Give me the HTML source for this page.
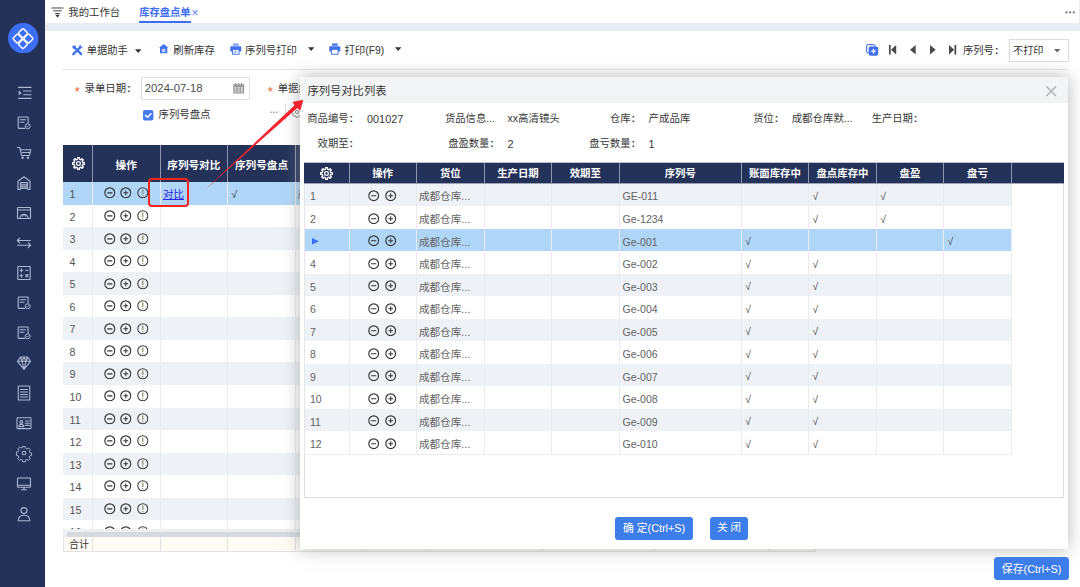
<!DOCTYPE html><html lang="zh-CN"><head><meta charset="utf-8"><title>库存盘点单</title><style>
*{box-sizing:border-box;margin:0;padding:0}
html,body{width:1080px;height:587px;overflow:hidden;background:#fff}
body{position:relative;font-family:"Liberation Sans","Noto Sans CJK SC",sans-serif;font-size:10.4px;color:#333;-webkit-font-smoothing:antialiased}
.abs{position:absolute}
.t{position:absolute;white-space:nowrap;line-height:14px;height:14px}
.sidebar{position:absolute;left:0;top:0;width:45px;height:587px;background:#24325a}
.sb{position:absolute;left:13.5px;width:20px;height:20px;overflow:visible}
.band{position:absolute;left:45px;top:23px;width:1035px;height:8px;background:#e7ecf5}
.hline{position:absolute;left:62px;top:69px;width:1006px;height:1px;background:#e6e6e6}
.mt{position:absolute;left:63px;top:145px;width:754px}
.mhead{position:absolute;left:0;top:0;height:36.7px;width:754px;background:#24325a}
.mh{position:absolute;top:0;height:36.7px;line-height:40.6px;color:#fff;font-weight:bold;font-size:10.6px;text-align:center;border-right:1px solid #8f97ae}
.mrow{position:absolute;left:0;height:23.6px;width:754px}
.mc{position:absolute;top:0;height:100%;border-right:1px solid #eaebee;line-height:22.6px;padding-top:1px;color:#555;font-size:10.6px;padding-left:6.6px;white-space:nowrap;overflow:hidden}
.dlg{position:absolute;left:300px;top:77px;width:768px;height:472px;border-left:1px solid #fff;background:#fff;box-shadow:0 0 16px rgba(140,140,140,.62)}
.dtitle{position:absolute;left:0;top:0;width:100%;height:25.6px;background:#f3f4f6}
.dh{position:absolute;top:0;height:20.6px;line-height:21.6px;color:#fff;font-weight:bold;font-size:10.4px;text-align:center;border-right:1px solid #8f97ae}
.drow{position:absolute;left:0;height:23px;width:708px}
.dc{position:absolute;top:0;height:100%;border-right:1px solid #eaebee;line-height:23.4px;padding-top:1.8px;color:#626262;font-size:10.5px;padding-left:3px;white-space:nowrap;overflow:hidden}
.lab{position:absolute;white-space:nowrap;line-height:14px;height:14px;text-align:right;color:#383838;font-size:10.3px}
.val{position:absolute;white-space:nowrap;line-height:14px;height:14px;color:#383838;font-size:10.45px}
.val.n{font-size:10.9px}
.btn{position:absolute;background:#3c7de9;color:#fff;border-radius:3px;text-align:center;white-space:nowrap}
.ico{position:absolute;overflow:visible}
.cl{display:inline-block;width:5.5px;text-align:center;font-weight:bold}
</style></head><body>

<svg width="0" height="0" style="position:absolute">
<defs>
<symbol id="cm" viewBox="0 0 12 12"><circle cx="6" cy="6" r="5.15" fill="none" stroke="#333" stroke-width="1.2"/><line x1="3.3" y1="6" x2="8.7" y2="6" stroke="#333" stroke-width="1.2"/></symbol>
<symbol id="cp" viewBox="0 0 12 12"><circle cx="6" cy="6" r="5.15" fill="none" stroke="#333" stroke-width="1.2"/><line x1="3.5" y1="6" x2="8.5" y2="6" stroke="#333" stroke-width="1.1"/><line x1="6" y1="3.5" x2="6" y2="8.5" stroke="#333" stroke-width="1.1"/></symbol>
<symbol id="ce" viewBox="0 0 12 12"><circle cx="6" cy="6" r="5.2" fill="none" stroke="#3a3a3a" stroke-width="1.1"/><line x1="6" y1="2.7" x2="6" y2="7.3" stroke="#7d7d55" stroke-width="1.1"/><circle cx="6" cy="9" r="0.7" fill="#7d7d55"/></symbol>
<symbol id="gear" viewBox="0 0 24 24"><path fill="none" stroke="#fff" stroke-width="2.5" stroke-linejoin="round" d="M10.11 4.12L10.41 1.22L13.59 1.22L13.89 4.12L16.23 5.09L18.5 3.25L20.75 5.5L18.91 7.77L19.88 10.11L22.78 10.41L22.78 13.59L19.88 13.89L18.91 16.23L20.75 18.5L18.5 20.75L16.23 18.91L13.89 19.88L13.59 22.78L10.41 22.78L10.11 19.88L7.77 18.91L5.5 20.75L3.25 18.5L5.09 16.23L4.12 13.89L1.22 13.59L1.22 10.41L4.12 10.11L5.09 7.77L3.25 5.5L5.5 3.25L7.77 5.09z"/><circle cx="12" cy="12" r="3.5" fill="none" stroke="#fff" stroke-width="2.3"/></symbol>
<symbol id="doc" viewBox="0 0 20 20"><path fill="none" stroke="#aeb7d3" stroke-width="1.1" stroke-linecap="round" d="M10.6 15.4H5a.8.8 0 0 1-.8-.8V4.8A.8.8 0 0 1 5 4h8.3a.8.8 0 0 1 .8.8V10M6.2 6.8h5.4M6.2 9.3h3.8"/><circle cx="13.7" cy="13.3" r="2.5" fill="none" stroke="#aeb7d3" stroke-width="1"/><path d="M12.6 13.3l.8.8 1.4-1.5" fill="none" stroke="#aeb7d3" stroke-width=".9"/></symbol>
</defs>
</svg>

<div class="sidebar">
<svg class="abs" style="left:8.35px;top:22.7px" width="30.4" height="30.4" viewBox="0 0 30.4 30.4"><circle cx="15.2" cy="15.2" r="15.2" fill="#3d6ef6"/><g fill="none" stroke="#fff" stroke-width="1.45" transform="translate(15 15.6) rotate(45)"><rect x="-7.3" y="-7.3" width="6.9" height="6.9" rx="1.2"/><rect x=".4" y="-7.3" width="6.9" height="6.9" rx="1.2"/><rect x="-7.3" y=".4" width="6.9" height="6.9" rx="1.2"/><rect x=".4" y=".4" width="6.9" height="6.9" rx="1.2"/></g></svg>
<svg class="sb" style="top:83.2px" viewBox="0 0 20 20"><g fill="none" stroke="#aeb7d3" stroke-width="1.1" stroke-linecap="round" stroke-linejoin="round"><path d="M4.7 4.4h12.4M9.5 8h7.6M9.5 11.7h7.6M4.7 15.4h12.4"/></g><path d="M4.7 7.6l3 2.3-3 2.3z" fill="#aeb7d3"/></svg>
<svg class="sb" style="top:113.2px" viewBox="0 0 20 20"><use href="#doc"/></svg>
<svg class="sb" style="top:143.2px" viewBox="0 0 20 20"><g fill="none" stroke="#aeb7d3" stroke-width="1.1" stroke-linecap="round" stroke-linejoin="round"><path d="M3.5 4.5h2.2l2 8h7.6l1.5-5.8H6.5"/><circle cx="8.6" cy="14.8" r=".7"/><circle cx="14" cy="14.8" r=".7"/><path d="M8.4 9.5h7.5"/></g></svg>
<svg class="sb" style="top:173.3px" viewBox="0 0 20 20"><g fill="none" stroke="#aeb7d3" stroke-width="1.1" stroke-linecap="round" stroke-linejoin="round"><path d="M4 16.5V8.2L10 3.8l6 4.4v8.3h-2.2v-1.2H6.2v1.2z"/><path d="M6.5 9.5h7v5.5h-7zM6.5 11.3h7M6.5 13.1h7"/></g></svg>
<svg class="sb" style="top:203.3px" viewBox="0 0 20 20"><g fill="none" stroke="#aeb7d3" stroke-width="1.1" stroke-linecap="round" stroke-linejoin="round"><rect x="3.5" y="4.5" width="13" height="11" rx=".6"/><path d="M3.5 7h13M6 15.3a4 4 0 0 1 8 0M10 11.3v1.2M7.8 12.3l.7.8M12.2 12.3l-.7.8"/></g></svg>
<svg class="sb" style="top:233.3px" viewBox="0 0 20 20"><g fill="none" stroke="#aeb7d3" stroke-width="1.1" stroke-linecap="round" stroke-linejoin="round"><path d="M16.4 7.5H3.3M5.7 5.1L3.3 7.5l2.4 2.4M3.6 12.3h13.1M14.3 9.9l2.4 2.4-2.4 2.4"/></g></svg>
<svg class="sb" style="top:263.3px" viewBox="0 0 20 20"><g fill="none" stroke="#aeb7d3" stroke-width="1.1" stroke-linecap="round" stroke-linejoin="round"><rect x="3.8" y="3.5" width="12.4" height="13" rx=".6"/><path d="M6 7.3h2.8M7.4 5.9v2.8M11.5 7.3h2.6M6 12.7h2.8M7.4 11.3v2.8M11.7 11.5l2.3 2.4M14 11.5l-2.3 2.4"/></g></svg>
<svg class="sb" style="top:293.3px" viewBox="0 0 20 20"><use href="#doc"/></svg>
<svg class="sb" style="top:323.4px" viewBox="0 0 20 20"><use href="#doc"/></svg>
<svg class="sb" style="top:353.4px" viewBox="0 0 20 20"><g fill="none" stroke="#aeb7d3" stroke-width="1.1" stroke-linecap="round" stroke-linejoin="round"><path d="M3.5 8.3L6.5 4h7l3 4.3L10 16.5zM3.5 8.3h13M6.5 4l1.5 4.3 2 8.2M13.5 4L12 8.3l-2 8.2M10 4L8 8.3M10 4l2 4.3"/></g></svg>
<svg class="sb" style="top:383.4px" viewBox="0 0 20 20"><g fill="none" stroke="#aeb7d3" stroke-width="1.1" stroke-linecap="round" stroke-linejoin="round"><rect x="4.3" y="3" width="11.4" height="14" rx=".6"/><path d="M6.5 6.5h7M6.5 9h7M6.5 11.5h7M6.5 14h7"/></g></svg>
<svg class="sb" style="top:413.4px" viewBox="0 0 20 20"><g fill="none" stroke="#aeb7d3" stroke-width="1.1" stroke-linecap="round" stroke-linejoin="round"><rect x="3" y="4.8" width="14" height="10.8" rx=".6"/><circle cx="7.3" cy="9" r="1.4"/><path d="M4.8 13.7c.3-1.7 1.3-2.3 2.5-2.3s2.2.6 2.5 2.3zM11.3 8h4M11.3 10.2h4M11.3 12.4h4"/></g></svg>
<svg class="sb" style="top:443.4px" viewBox="0 0 20 20"><g fill="none" stroke="#aeb7d3" stroke-width="1.1" stroke-linecap="round" stroke-linejoin="round"><path d="M8.6 2.8h2.8l.5 2 1.5.7 1.8-1.1 2 2-1.1 1.8.7 1.5 2 .5v2.8l-2 .5-.7 1.5 1.1 1.8-2 2-1.8-1.1-1.5.7-.5 2H8.6l-.5-2-1.5-.7-1.8 1.1-2-2 1.1-1.8-.7-1.5-2-.5V9.2l2-.5.7-1.5-1.1-1.8 2-2 1.8 1.1 1.5-.7z" transform="translate(1.4 1.2) scale(.86)"/><circle cx="10" cy="10" r="1.8"/></g></svg>
<svg class="sb" style="top:473.5px" viewBox="0 0 20 20"><g fill="none" stroke="#aeb7d3" stroke-width="1.1" stroke-linecap="round" stroke-linejoin="round"><rect x="3.5" y="4" width="13" height="9.2" rx=".5"/><path d="M3.5 11.3h13M7.5 15.8h5M10 13.2v2.6"/></g></svg>
<svg class="sb" style="top:503.5px" viewBox="0 0 20 20"><g fill="none" stroke="#aeb7d3" stroke-width="1.1" stroke-linecap="round" stroke-linejoin="round"><circle cx="10" cy="6.6" r="3"/><path d="M4.3 16.8c0-4 2.5-5.6 5.7-5.6s5.7 1.6 5.7 5.6z"/></g></svg>
</div>
<svg class="ico" style="left:50.5px;top:6.5px" width="13" height="11" viewBox="0 0 13 11"><path d="M.5 1h12M2.3 3.8h8.4M4.3 6.5h4.4" stroke="#444" stroke-width="1" fill="none"/><path d="M4.2 7.8h4.6L6.5 10.5z" fill="#333"/></svg>
<div class="t" style="left:68.3px;top:5.8px;font-size:10.4px;color:#333">我的工作台</div>
<div class="t" style="left:139.2px;top:5.8px;font-size:10.3px;color:#3d6df5;font-weight:bold">库存盘点单</div>
<div class="t" style="left:191.6px;top:5.8px;font-size:12px;color:#5f86f0">×</div>
<div class="abs" style="left:139.2px;top:20.5px;width:51.6px;height:2.5px;background:#3d6df5"></div>
<svg class="ico" style="left:1065px;top:10.5px" width="10" height="3" viewBox="0 0 10 3"><circle cx="1.4" cy="1.4" r="1.15" fill="#7d7d7d"/><circle cx="5.1" cy="1.4" r="1.15" fill="#7d7d7d"/><circle cx="8.8" cy="1.4" r="1.15" fill="#7d7d7d"/></svg>
<div class="band"></div>
<div class="abs" style="left:1079px;top:0;width:1px;height:24px;background:#e7ecf5"></div>
<svg class="ico" style="left:71.5px;top:44.8px" width="10.5" height="10.5" viewBox="0 0 12 12"><path d="M2 2l8.5 8.5M10 2L1.5 10.5" stroke="#4271ec" stroke-width="2.7" stroke-linecap="round"/><path d="M.3 2.3L2.3.3 4.5 1.5 3.8 3.8 1.5 4.5z" fill="#4271ec"/><circle cx="10" cy="2" r="2" fill="#4271ec"/><circle cx="11" cy="1" r="1.1" fill="#fff"/></svg>
<div class="t" style="left:86.7px;top:44.3px;font-size:10.3px">单据助手</div>
<svg class="ico" style="left:134.8px;top:48.8px" width="6.4" height="4" viewBox="0 0 6.4 4"><path d="M0 .3h6.4L3.2 4z" fill="#333"/></svg>
<svg class="ico" style="left:159.3px;top:44.2px" width="9.3" height="9.3" viewBox="0 0 9 9"><path d="M4.5 0L9 3.6H8V9H1V3.6H0z" fill="#4271ec"/><path d="M3.2 7.4V5.2h2.6v2.2zM4.5 5.2v2.2" stroke="#fff" stroke-width=".7" fill="none"/></svg>
<div class="t" style="left:173.3px;top:44.3px;font-size:10.4px">刷新库存</div>
<svg class="ico" style="left:229.8px;top:43.3px" width="11.6" height="11.6" viewBox="0 0 12 12"><path d="M3 0.5h6v2.3H3z" fill="#7f9df5"/><rect x="0.3" y="3.3" width="11.4" height="5.6" rx="1" fill="#4271ec"/><rect x="2.6" y="6.6" width="6.8" height="5" fill="#fff" stroke="#4271ec" stroke-width="1"/><path d="M4.2 8.5h3.6M4.2 10h2" stroke="#4271ec" stroke-width=".7"/></svg>
<div class="t" style="left:245px;top:44.3px;font-size:10.4px">序列号打印</div>
<svg class="ico" style="left:308.3px;top:47.4px" width="6.4" height="4" viewBox="0 0 6.4 4"><path d="M0 .3h6.4L3.2 4z" fill="#333"/></svg>
<svg class="ico" style="left:329px;top:43.3px" width="11.6" height="11.6" viewBox="0 0 12 12"><path d="M3 0.5h6v2.3H3z" fill="#4271ec"/><rect x="0.3" y="3.3" width="11.4" height="5.6" rx="1" fill="#4271ec"/><rect x="2.6" y="6.6" width="6.8" height="5" fill="#fff" stroke="#4271ec" stroke-width="1"/></svg>
<div class="t" style="left:344.4px;top:44.3px;font-size:10.4px">打印(F9)</div>
<svg class="ico" style="left:394.8px;top:47.4px" width="6.4" height="4" viewBox="0 0 6.4 4"><path d="M0 .3h6.4L3.2 4z" fill="#333"/></svg>
<svg class="ico" style="left:865.6px;top:43.8px" width="12.2" height="11.8" viewBox="0 0 12.2 11.8"><rect x=".5" y=".5" width="8.6" height="8.4" rx="1.6" fill="#dfe7fd" stroke="#4271ec" stroke-width="1"/><rect x="2.8" y="2.6" width="9.4" height="9.2" rx="1.8" fill="#4271ec"/><path d="M7.5 5v4.4M5.3 7.2h4.4" stroke="#fff" stroke-width="1.3"/></svg>
<svg class="ico" style="left:888.6px;top:45.2px" width="7.2" height="9.6" viewBox="0 0 7.2 8.6" preserveAspectRatio="none"><rect x="0" y="0" width="1.7" height="8.6" fill="#4a4a4a"/><path d="M7.2 0v8.6L2 4.3z" fill="#4a4a4a"/></svg>
<svg class="ico" style="left:910px;top:45.2px" width="5.7" height="9.6" viewBox="0 0 5.7 8.6" preserveAspectRatio="none"><path d="M5.7 0v8.6L0 4.3z" fill="#4a4a4a"/></svg>
<svg class="ico" style="left:929.8px;top:45.2px" width="5.7" height="9.6" viewBox="0 0 5.7 8.6" preserveAspectRatio="none"><path d="M0 0v8.6L5.7 4.3z" fill="#4a4a4a"/></svg>
<svg class="ico" style="left:949px;top:45.2px" width="7.2" height="9.6" viewBox="0 0 7.2 8.6" preserveAspectRatio="none"><rect x="5.5" y="0" width="1.7" height="8.6" fill="#4a4a4a"/><path d="M0 0v8.6L5.2 4.3z" fill="#4a4a4a"/></svg>
<div class="t" style="left:963px;top:44.3px;font-size:10.3px">序列号<span class="cl">:</span></div>
<div class="abs" style="left:1009px;top:39px;width:59.5px;height:22.5px;border:1px solid #dcdcdc;background:#fff"></div>
<div class="t" style="left:1013px;top:44.3px;font-size:10.2px">不打印</div>
<svg class="ico" style="left:1053.6px;top:48.8px" width="6.4" height="3.6" viewBox="0 0 6.4 3.6"><path d="M0 0h6.4L3.2 3.6z" fill="#666"/></svg>
<div class="hline"></div>
<div class="t" style="left:74.7px;top:84.5px;font-size:13px;color:#f25a2a">*</div>
<div class="t" style="left:84.6px;top:81.5px;font-size:10.4px">录单日期<span class="cl">:</span></div>
<div class="abs" style="left:141px;top:77.2px;width:108.5px;height:23px;border:1px solid #e0e0e0;background:#fff"></div>
<div class="t" style="left:144.8px;top:81px;font-size:11.3px;color:#4c4c4c">2024-07-18</div>
<svg class="ico" style="left:233px;top:83.2px" width="11.4" height="10.8" viewBox="0 0 11.4 10.8"><rect x=".3" y="1.3" width="10.8" height="9.2" fill="#8c8c8c"/><g fill="#fff" opacity=".72"><rect x="1.3" y="4" width="2.3" height="1.7"/><rect x="4.5" y="4" width="2.3" height="1.7"/><rect x="7.7" y="4" width="2.4" height="1.7"/><rect x="1.3" y="6.2" width="2.3" height="1.5"/><rect x="4.5" y="6.2" width="2.3" height="1.5"/><rect x="7.7" y="6.2" width="2.4" height="1.5"/><rect x="1.3" y="8.2" width="2.3" height="1.4"/><rect x="4.5" y="8.2" width="2.3" height="1.4"/><rect x="7.7" y="8.2" width="2.4" height="1.4"/></g><path d="M2.8 0v2.6M5.7 0v2.6M8.6 0v2.6" stroke="#8c8c8c" stroke-width="1.1"/><path d="M1.3 2.7h1M3.4 2.7h1.6M6.4 2.7h1.6M9.2 2.7h1" stroke="#fff" stroke-width=".6"/></svg>
<div class="t" style="left:267.7px;top:84.5px;font-size:13px;color:#f25a2a">*</div>
<div class="t" style="left:277.7px;top:81.5px;font-size:10.4px">单据编号<span class="cl">:</span></div>
<svg class="ico" style="left:143px;top:109.9px" width="10.4" height="10.4" viewBox="0 0 10.4 10.4"><rect width="10.4" height="10.4" rx="2" fill="#4679ee"/><path d="M2.5 5.4l2 1.9 3.5-3.6" fill="none" stroke="#fff" stroke-width="1.5" stroke-linecap="round" stroke-linejoin="round"/></svg>
<div class="t" style="left:158.5px;top:108.1px;font-size:10.4px">序列号盘点</div>
<svg class="ico" style="left:270px;top:111.3px" width="7.5" height="2.4" viewBox="0 0 7.5 2.4"><circle cx="1" cy="1.2" r=".8" fill="#8a8a8a"/><circle cx="3.75" cy="1.2" r=".8" fill="#8a8a8a"/><circle cx="6.5" cy="1.2" r=".8" fill="#8a8a8a"/></svg>
<div class="abs" style="left:285px;top:103.5px;width:1px;height:17px;background:#ddd"></div>
<svg class="ico" style="left:290.5px;top:106px" width="12" height="12" viewBox="0 0 24 24"><g style="--c:#888"><path fill="none" stroke="#888" stroke-width="2" d="M10.3 2.5h3.4l.6 2.7 1.9.8 2.4-1.5 2.4 2.4-1.5 2.4.8 1.9 2.7.6v3.4l-2.7.6-.8 1.9 1.5 2.4-2.4 2.4-2.4-1.5-1.9.8-.6 2.7h-3.4l-.6-2.7-1.9-.8-2.4 1.5-2.4-2.4 1.5-2.4-.8-1.9-2.7-.6v-3.4l2.7-.6.8-1.9-1.5-2.4 2.4-2.4 2.4 1.5 1.9-.8z" transform="translate(0 -1.7)"/><circle cx="12" cy="12" r="3.2" fill="none" stroke="#888" stroke-width="2"/></g></svg>
<div class="mt">
<div class="mhead">
<div class="mh" style="left:0px;width:29.8px"><svg style="position:absolute;left:8.9px;top:12px" width="13" height="13" viewBox="0 0 24 24"><use href="#gear"/></svg></div>
<div class="mh" style="left:29.8px;width:67.8px">操作</div>
<div class="mh" style="left:97.6px;width:67.4px">序列号对比</div>
<div class="mh" style="left:165px;width:68px">序列号盘点</div>
<div class="mh" style="left:233px;width:66.5px">仓库</div>
<div class="mh" style="left:299.5px;width:67.5px">货位</div>
<div class="mh" style="left:367px;width:113.3px">货品信息</div>
<div class="mh" style="left:480.3px;width:111.7px">序列号</div>
<div class="mh" style="left:592px;width:113.5px">账面数量</div>
<div class="mh" style="left:705.5px;width:47.5px">盘点数量</div>
</div>
<div class="mrow" style="top:36.7px;background:#b0d6f7">
<div class="mc" style="left:0px;width:29.8px;">1</div>
<div class="mc" style="left:29.8px;width:67.8px;"><svg class="ico" style="left:11.2px;top:5.4px" width="11.6" height="11.6"><use href="#cm"/></svg><svg class="ico" style="left:27.6px;top:5.4px" width="11.6" height="11.6"><use href="#cp"/></svg><svg class="ico" style="left:43.8px;top:5.4px" width="11.6" height="11.6"><use href="#ce"/></svg></div>
<div class="mc" style="left:97.6px;width:67.4px;"><span style="color:#2525ee;text-decoration:underline;font-size:10.5px;margin-left:-4.2px">对比</span></div>
<div class="mc" style="left:165px;width:68px;"><span style="margin-left:-3.3px;font-size:10.6px;color:#333;position:relative;top:.2px">√</span></div>
<div class="mc" style="left:233px;width:66.5px;"><span style="margin-left:-5px">产成品库</span></div>
<div class="mc" style="left:299.5px;width:67.5px;"></div>
<div class="mc" style="left:367px;width:113.3px;"></div>
<div class="mc" style="left:480.3px;width:111.7px;"></div>
<div class="mc" style="left:592px;width:113.5px;"></div>
<div class="mc" style="left:705.5px;width:47.5px;"></div>
</div>
<div class="mrow" style="top:59.73px;background:#fff">
<div class="mc" style="left:0px;width:29.8px;">2</div>
<div class="mc" style="left:29.8px;width:67.8px;"><svg class="ico" style="left:11.2px;top:5.4px" width="11.6" height="11.6"><use href="#cm"/></svg><svg class="ico" style="left:27.6px;top:5.4px" width="11.6" height="11.6"><use href="#cp"/></svg><svg class="ico" style="left:43.8px;top:5.4px" width="11.6" height="11.6"><use href="#ce"/></svg></div>
<div class="mc" style="left:97.6px;width:67.4px;"></div>
<div class="mc" style="left:165px;width:68px;"></div>
<div class="mc" style="left:233px;width:66.5px;"></div>
<div class="mc" style="left:299.5px;width:67.5px;"></div>
<div class="mc" style="left:367px;width:113.3px;"></div>
<div class="mc" style="left:480.3px;width:111.7px;"></div>
<div class="mc" style="left:592px;width:113.5px;"></div>
<div class="mc" style="left:705.5px;width:47.5px;"></div>
</div>
<div class="mrow" style="top:82.26px;background:#eef1f6">
<div class="mc" style="left:0px;width:29.8px;">3</div>
<div class="mc" style="left:29.8px;width:67.8px;"><svg class="ico" style="left:11.2px;top:5.4px" width="11.6" height="11.6"><use href="#cm"/></svg><svg class="ico" style="left:27.6px;top:5.4px" width="11.6" height="11.6"><use href="#cp"/></svg><svg class="ico" style="left:43.8px;top:5.4px" width="11.6" height="11.6"><use href="#ce"/></svg></div>
<div class="mc" style="left:97.6px;width:67.4px;"></div>
<div class="mc" style="left:165px;width:68px;"></div>
<div class="mc" style="left:233px;width:66.5px;"></div>
<div class="mc" style="left:299.5px;width:67.5px;"></div>
<div class="mc" style="left:367px;width:113.3px;"></div>
<div class="mc" style="left:480.3px;width:111.7px;"></div>
<div class="mc" style="left:592px;width:113.5px;"></div>
<div class="mc" style="left:705.5px;width:47.5px;"></div>
</div>
<div class="mrow" style="top:104.79px;background:#fff">
<div class="mc" style="left:0px;width:29.8px;">4</div>
<div class="mc" style="left:29.8px;width:67.8px;"><svg class="ico" style="left:11.2px;top:5.4px" width="11.6" height="11.6"><use href="#cm"/></svg><svg class="ico" style="left:27.6px;top:5.4px" width="11.6" height="11.6"><use href="#cp"/></svg><svg class="ico" style="left:43.8px;top:5.4px" width="11.6" height="11.6"><use href="#ce"/></svg></div>
<div class="mc" style="left:97.6px;width:67.4px;"></div>
<div class="mc" style="left:165px;width:68px;"></div>
<div class="mc" style="left:233px;width:66.5px;"></div>
<div class="mc" style="left:299.5px;width:67.5px;"></div>
<div class="mc" style="left:367px;width:113.3px;"></div>
<div class="mc" style="left:480.3px;width:111.7px;"></div>
<div class="mc" style="left:592px;width:113.5px;"></div>
<div class="mc" style="left:705.5px;width:47.5px;"></div>
</div>
<div class="mrow" style="top:127.32px;background:#eef1f6">
<div class="mc" style="left:0px;width:29.8px;">5</div>
<div class="mc" style="left:29.8px;width:67.8px;"><svg class="ico" style="left:11.2px;top:5.4px" width="11.6" height="11.6"><use href="#cm"/></svg><svg class="ico" style="left:27.6px;top:5.4px" width="11.6" height="11.6"><use href="#cp"/></svg><svg class="ico" style="left:43.8px;top:5.4px" width="11.6" height="11.6"><use href="#ce"/></svg></div>
<div class="mc" style="left:97.6px;width:67.4px;"></div>
<div class="mc" style="left:165px;width:68px;"></div>
<div class="mc" style="left:233px;width:66.5px;"></div>
<div class="mc" style="left:299.5px;width:67.5px;"></div>
<div class="mc" style="left:367px;width:113.3px;"></div>
<div class="mc" style="left:480.3px;width:111.7px;"></div>
<div class="mc" style="left:592px;width:113.5px;"></div>
<div class="mc" style="left:705.5px;width:47.5px;"></div>
</div>
<div class="mrow" style="top:149.85px;background:#fff">
<div class="mc" style="left:0px;width:29.8px;">6</div>
<div class="mc" style="left:29.8px;width:67.8px;"><svg class="ico" style="left:11.2px;top:5.4px" width="11.6" height="11.6"><use href="#cm"/></svg><svg class="ico" style="left:27.6px;top:5.4px" width="11.6" height="11.6"><use href="#cp"/></svg><svg class="ico" style="left:43.8px;top:5.4px" width="11.6" height="11.6"><use href="#ce"/></svg></div>
<div class="mc" style="left:97.6px;width:67.4px;"></div>
<div class="mc" style="left:165px;width:68px;"></div>
<div class="mc" style="left:233px;width:66.5px;"></div>
<div class="mc" style="left:299.5px;width:67.5px;"></div>
<div class="mc" style="left:367px;width:113.3px;"></div>
<div class="mc" style="left:480.3px;width:111.7px;"></div>
<div class="mc" style="left:592px;width:113.5px;"></div>
<div class="mc" style="left:705.5px;width:47.5px;"></div>
</div>
<div class="mrow" style="top:172.38px;background:#eef1f6">
<div class="mc" style="left:0px;width:29.8px;">7</div>
<div class="mc" style="left:29.8px;width:67.8px;"><svg class="ico" style="left:11.2px;top:5.4px" width="11.6" height="11.6"><use href="#cm"/></svg><svg class="ico" style="left:27.6px;top:5.4px" width="11.6" height="11.6"><use href="#cp"/></svg><svg class="ico" style="left:43.8px;top:5.4px" width="11.6" height="11.6"><use href="#ce"/></svg></div>
<div class="mc" style="left:97.6px;width:67.4px;"></div>
<div class="mc" style="left:165px;width:68px;"></div>
<div class="mc" style="left:233px;width:66.5px;"></div>
<div class="mc" style="left:299.5px;width:67.5px;"></div>
<div class="mc" style="left:367px;width:113.3px;"></div>
<div class="mc" style="left:480.3px;width:111.7px;"></div>
<div class="mc" style="left:592px;width:113.5px;"></div>
<div class="mc" style="left:705.5px;width:47.5px;"></div>
</div>
<div class="mrow" style="top:194.91px;background:#fff">
<div class="mc" style="left:0px;width:29.8px;">8</div>
<div class="mc" style="left:29.8px;width:67.8px;"><svg class="ico" style="left:11.2px;top:5.4px" width="11.6" height="11.6"><use href="#cm"/></svg><svg class="ico" style="left:27.6px;top:5.4px" width="11.6" height="11.6"><use href="#cp"/></svg><svg class="ico" style="left:43.8px;top:5.4px" width="11.6" height="11.6"><use href="#ce"/></svg></div>
<div class="mc" style="left:97.6px;width:67.4px;"></div>
<div class="mc" style="left:165px;width:68px;"></div>
<div class="mc" style="left:233px;width:66.5px;"></div>
<div class="mc" style="left:299.5px;width:67.5px;"></div>
<div class="mc" style="left:367px;width:113.3px;"></div>
<div class="mc" style="left:480.3px;width:111.7px;"></div>
<div class="mc" style="left:592px;width:113.5px;"></div>
<div class="mc" style="left:705.5px;width:47.5px;"></div>
</div>
<div class="mrow" style="top:217.44px;background:#eef1f6">
<div class="mc" style="left:0px;width:29.8px;">9</div>
<div class="mc" style="left:29.8px;width:67.8px;"><svg class="ico" style="left:11.2px;top:5.4px" width="11.6" height="11.6"><use href="#cm"/></svg><svg class="ico" style="left:27.6px;top:5.4px" width="11.6" height="11.6"><use href="#cp"/></svg><svg class="ico" style="left:43.8px;top:5.4px" width="11.6" height="11.6"><use href="#ce"/></svg></div>
<div class="mc" style="left:97.6px;width:67.4px;"></div>
<div class="mc" style="left:165px;width:68px;"></div>
<div class="mc" style="left:233px;width:66.5px;"></div>
<div class="mc" style="left:299.5px;width:67.5px;"></div>
<div class="mc" style="left:367px;width:113.3px;"></div>
<div class="mc" style="left:480.3px;width:111.7px;"></div>
<div class="mc" style="left:592px;width:113.5px;"></div>
<div class="mc" style="left:705.5px;width:47.5px;"></div>
</div>
<div class="mrow" style="top:239.97px;background:#fff">
<div class="mc" style="left:0px;width:29.8px;">10</div>
<div class="mc" style="left:29.8px;width:67.8px;"><svg class="ico" style="left:11.2px;top:5.4px" width="11.6" height="11.6"><use href="#cm"/></svg><svg class="ico" style="left:27.6px;top:5.4px" width="11.6" height="11.6"><use href="#cp"/></svg><svg class="ico" style="left:43.8px;top:5.4px" width="11.6" height="11.6"><use href="#ce"/></svg></div>
<div class="mc" style="left:97.6px;width:67.4px;"></div>
<div class="mc" style="left:165px;width:68px;"></div>
<div class="mc" style="left:233px;width:66.5px;"></div>
<div class="mc" style="left:299.5px;width:67.5px;"></div>
<div class="mc" style="left:367px;width:113.3px;"></div>
<div class="mc" style="left:480.3px;width:111.7px;"></div>
<div class="mc" style="left:592px;width:113.5px;"></div>
<div class="mc" style="left:705.5px;width:47.5px;"></div>
</div>
<div class="mrow" style="top:262.5px;background:#eef1f6">
<div class="mc" style="left:0px;width:29.8px;">11</div>
<div class="mc" style="left:29.8px;width:67.8px;"><svg class="ico" style="left:11.2px;top:5.4px" width="11.6" height="11.6"><use href="#cm"/></svg><svg class="ico" style="left:27.6px;top:5.4px" width="11.6" height="11.6"><use href="#cp"/></svg><svg class="ico" style="left:43.8px;top:5.4px" width="11.6" height="11.6"><use href="#ce"/></svg></div>
<div class="mc" style="left:97.6px;width:67.4px;"></div>
<div class="mc" style="left:165px;width:68px;"></div>
<div class="mc" style="left:233px;width:66.5px;"></div>
<div class="mc" style="left:299.5px;width:67.5px;"></div>
<div class="mc" style="left:367px;width:113.3px;"></div>
<div class="mc" style="left:480.3px;width:111.7px;"></div>
<div class="mc" style="left:592px;width:113.5px;"></div>
<div class="mc" style="left:705.5px;width:47.5px;"></div>
</div>
<div class="mrow" style="top:285.03px;background:#fff">
<div class="mc" style="left:0px;width:29.8px;">12</div>
<div class="mc" style="left:29.8px;width:67.8px;"><svg class="ico" style="left:11.2px;top:5.4px" width="11.6" height="11.6"><use href="#cm"/></svg><svg class="ico" style="left:27.6px;top:5.4px" width="11.6" height="11.6"><use href="#cp"/></svg><svg class="ico" style="left:43.8px;top:5.4px" width="11.6" height="11.6"><use href="#ce"/></svg></div>
<div class="mc" style="left:97.6px;width:67.4px;"></div>
<div class="mc" style="left:165px;width:68px;"></div>
<div class="mc" style="left:233px;width:66.5px;"></div>
<div class="mc" style="left:299.5px;width:67.5px;"></div>
<div class="mc" style="left:367px;width:113.3px;"></div>
<div class="mc" style="left:480.3px;width:111.7px;"></div>
<div class="mc" style="left:592px;width:113.5px;"></div>
<div class="mc" style="left:705.5px;width:47.5px;"></div>
</div>
<div class="mrow" style="top:307.56px;background:#eef1f6">
<div class="mc" style="left:0px;width:29.8px;">13</div>
<div class="mc" style="left:29.8px;width:67.8px;"><svg class="ico" style="left:11.2px;top:5.4px" width="11.6" height="11.6"><use href="#cm"/></svg><svg class="ico" style="left:27.6px;top:5.4px" width="11.6" height="11.6"><use href="#cp"/></svg><svg class="ico" style="left:43.8px;top:5.4px" width="11.6" height="11.6"><use href="#ce"/></svg></div>
<div class="mc" style="left:97.6px;width:67.4px;"></div>
<div class="mc" style="left:165px;width:68px;"></div>
<div class="mc" style="left:233px;width:66.5px;"></div>
<div class="mc" style="left:299.5px;width:67.5px;"></div>
<div class="mc" style="left:367px;width:113.3px;"></div>
<div class="mc" style="left:480.3px;width:111.7px;"></div>
<div class="mc" style="left:592px;width:113.5px;"></div>
<div class="mc" style="left:705.5px;width:47.5px;"></div>
</div>
<div class="mrow" style="top:330.09px;background:#fff">
<div class="mc" style="left:0px;width:29.8px;">14</div>
<div class="mc" style="left:29.8px;width:67.8px;"><svg class="ico" style="left:11.2px;top:5.4px" width="11.6" height="11.6"><use href="#cm"/></svg><svg class="ico" style="left:27.6px;top:5.4px" width="11.6" height="11.6"><use href="#cp"/></svg><svg class="ico" style="left:43.8px;top:5.4px" width="11.6" height="11.6"><use href="#ce"/></svg></div>
<div class="mc" style="left:97.6px;width:67.4px;"></div>
<div class="mc" style="left:165px;width:68px;"></div>
<div class="mc" style="left:233px;width:66.5px;"></div>
<div class="mc" style="left:299.5px;width:67.5px;"></div>
<div class="mc" style="left:367px;width:113.3px;"></div>
<div class="mc" style="left:480.3px;width:111.7px;"></div>
<div class="mc" style="left:592px;width:113.5px;"></div>
<div class="mc" style="left:705.5px;width:47.5px;"></div>
</div>
<div class="mrow" style="top:352.62px;background:#eef1f6">
<div class="mc" style="left:0px;width:29.8px;">15</div>
<div class="mc" style="left:29.8px;width:67.8px;"><svg class="ico" style="left:11.2px;top:5.4px" width="11.6" height="11.6"><use href="#cm"/></svg><svg class="ico" style="left:27.6px;top:5.4px" width="11.6" height="11.6"><use href="#cp"/></svg><svg class="ico" style="left:43.8px;top:5.4px" width="11.6" height="11.6"><use href="#ce"/></svg></div>
<div class="mc" style="left:97.6px;width:67.4px;"></div>
<div class="mc" style="left:165px;width:68px;"></div>
<div class="mc" style="left:233px;width:66.5px;"></div>
<div class="mc" style="left:299.5px;width:67.5px;"></div>
<div class="mc" style="left:367px;width:113.3px;"></div>
<div class="mc" style="left:480.3px;width:111.7px;"></div>
<div class="mc" style="left:592px;width:113.5px;"></div>
<div class="mc" style="left:705.5px;width:47.5px;"></div>
</div>
<div class="mrow" style="top:375.15px;background:#fff">
<div class="mc" style="left:0px;width:29.8px;">16</div>
<div class="mc" style="left:29.8px;width:67.8px;"><svg class="ico" style="left:11.2px;top:5.4px" width="11.6" height="11.6"><use href="#cm"/></svg><svg class="ico" style="left:27.6px;top:5.4px" width="11.6" height="11.6"><use href="#cp"/></svg><svg class="ico" style="left:43.8px;top:5.4px" width="11.6" height="11.6"><use href="#ce"/></svg></div>
<div class="mc" style="left:97.6px;width:67.4px;"></div>
<div class="mc" style="left:165px;width:68px;"></div>
<div class="mc" style="left:233px;width:66.5px;"></div>
<div class="mc" style="left:299.5px;width:67.5px;"></div>
<div class="mc" style="left:367px;width:113.3px;"></div>
<div class="mc" style="left:480.3px;width:111.7px;"></div>
<div class="mc" style="left:592px;width:113.5px;"></div>
<div class="mc" style="left:705.5px;width:47.5px;"></div>
</div>
</div>
<div class="abs" style="left:62px;top:529.4px;width:760px;height:30px;background:#fff"></div>
<div class="abs" style="left:62.5px;top:529.4px;width:753.5px;height:8px;background:#eef0f3"></div>
<div class="abs" style="left:66.6px;top:532.4px;width:560px;height:4.4px;background:#d6dade;border-radius:1px"></div>
<div class="abs" style="left:62.5px;top:537.3px;width:753.5px;height:15px;background:#fefcf4;border:1px solid #e2e2e2;border-top:none"></div>
<div class="abs" style="left:91.8px;top:537.3px;width:1px;height:15px;background:#e2e2e2"></div>
<div class="abs" style="left:159.6px;top:537.3px;width:1px;height:15px;background:#e2e2e2"></div>
<div class="abs" style="left:227px;top:537.3px;width:1px;height:15px;background:#e2e2e2"></div>
<div class="abs" style="left:295px;top:537.3px;width:1px;height:15px;background:#e2e2e2"></div>
<div class="abs" style="left:361.5px;top:537.3px;width:1px;height:15px;background:#e2e2e2"></div>
<div class="abs" style="left:429px;top:537.3px;width:1px;height:15px;background:#e2e2e2"></div>
<div class="abs" style="left:542.3px;top:537.3px;width:1px;height:15px;background:#e2e2e2"></div>
<div class="abs" style="left:654px;top:537.3px;width:1px;height:15px;background:#e2e2e2"></div>
<div class="abs" style="left:767.5px;top:537.3px;width:1px;height:15px;background:#e2e2e2"></div>
<div class="t" style="left:69px;top:538px;font-size:10px;color:#333">合计</div>
<div class="abs" style="left:148px;top:177.7px;width:41.4px;height:29.5px;border:2.1px solid #f4251f;border-radius:4px"></div>
<div class="dlg">
<div class="dtitle"></div>
<div class="t" style="left:6.4px;top:6.5px;font-size:11.3px;color:#333">序列号对比列表</div>
<svg class="ico" style="left:745.2px;top:8.8px" width="10.4" height="10.4" viewBox="0 0 10.4 10.4"><path d="M.4.4l9.6 9.6M10 .4L.4 10" stroke="#b2b6bd" stroke-width="1.5"/></svg>
<div class="lab" style="right:714px;top:34.7px">商品编号<span class="cl">:</span></div>
<div class="val n" style="left:66px;top:34.7px">001027</div>
<div class="lab" style="right:573.2px;top:34.7px">货品信息...</div>
<div class="val" style="left:206.6px;top:34.7px">xx高清镜头</div>
<div class="lab" style="right:432px;top:34.7px">仓库<span class="cl">:</span></div>
<div class="val" style="left:347.6px;top:34.7px">产成品库</div>
<div class="lab" style="right:288.7px;top:34.7px">货位<span class="cl">:</span></div>
<div class="val" style="left:490.7px;top:34.7px">成都仓库默...</div>
<div class="lab" style="right:149.7px;top:34.7px">生产日期<span class="cl">:</span></div>
<div class="lab" style="right:714px;top:60.2px">效期至<span class="cl">:</span></div>
<div class="lab" style="right:573.2px;top:60.2px">盘盈数量<span class="cl">:</span></div>
<div class="val n" style="left:206.6px;top:60.2px">2</div>
<div class="lab" style="right:432px;top:60.2px">盘亏数量<span class="cl">:</span></div>
<div class="val n" style="left:347.6px;top:60.2px">1</div>
<div class="abs" style="left:3px;top:85.8px;width:760px;height:335.2px;border:1px solid #dcdfe4;border-top:none;background:#fff">
<div class="abs" style="left:-1px;top:0;width:760px;height:20.6px;background:#24325a">
<div class="dh" style="left:0px;width:45.5px;"><svg style="position:absolute;left:16.4px;top:4.2px" width="13" height="13" viewBox="0 0 24 24"><use href="#gear"/></svg></div>
<div class="dh" style="left:45.5px;width:67.2px;">操作</div>
<div class="dh" style="left:112.7px;width:68.2px;">货位</div>
<div class="dh" style="left:180.9px;width:67.1px;">生产日期</div>
<div class="dh" style="left:248px;width:67.6px;">效期至</div>
<div class="dh" style="left:315.6px;width:122.3px;">序列号</div>
<div class="dh" style="left:437.9px;width:67.1px;">账面库存中</div>
<div class="dh" style="left:505px;width:67.9px;">盘点库存中</div>
<div class="dh" style="left:572.9px;width:67.1px;">盘盈</div>
<div class="dh" style="left:640px;width:67.9px;">盘亏</div>
<div class="dh" style="left:707.9px;width:52.1px;border-right:none;"></div>
</div>
<div class="drow" style="left:-1px;top:20.6px;background:#eef1f6">
<div class="dc" style="left:0px;width:45.5px;padding-left:6px;">1</div>
<div class="dc" style="left:45.5px;width:67.2px;"><svg class="ico" style="left:18.8px;top:6.6px" width="11.4" height="11.4"><use href="#cm"/></svg><svg class="ico" style="left:35.5px;top:6.6px" width="11.4" height="11.4"><use href="#cp"/></svg></div>
<div class="dc" style="left:112.7px;width:68.2px;font-size:10.6px;padding-left:2.2px;color:#646464;">成都仓库...</div>
<div class="dc" style="left:180.9px;width:67.1px;"></div>
<div class="dc" style="left:248px;width:67.6px;"></div>
<div class="dc" style="left:315.6px;width:122.3px;">GE-011</div>
<div class="dc" style="left:437.9px;width:67.1px;"></div>
<div class="dc" style="left:505px;width:67.9px;"><span style="font-size:10.3px;color:#444;margin-left:.4px;position:relative;top:-.7px">√</span></div>
<div class="dc" style="left:572.9px;width:67.1px;"><span style="font-size:10.3px;color:#444;margin-left:.4px;position:relative;top:-.7px">√</span></div>
<div class="dc" style="left:640px;width:67.9px;"></div>
</div>
<div class="drow" style="left:-1px;top:43.6px;background:#fff">
<div class="dc" style="left:0px;width:45.5px;padding-left:6px;">2</div>
<div class="dc" style="left:45.5px;width:67.2px;"><svg class="ico" style="left:18.8px;top:6.6px" width="11.4" height="11.4"><use href="#cm"/></svg><svg class="ico" style="left:35.5px;top:6.6px" width="11.4" height="11.4"><use href="#cp"/></svg></div>
<div class="dc" style="left:112.7px;width:68.2px;font-size:10.6px;padding-left:2.2px;color:#646464;">成都仓库...</div>
<div class="dc" style="left:180.9px;width:67.1px;"></div>
<div class="dc" style="left:248px;width:67.6px;"></div>
<div class="dc" style="left:315.6px;width:122.3px;">Ge-1234</div>
<div class="dc" style="left:437.9px;width:67.1px;"></div>
<div class="dc" style="left:505px;width:67.9px;"><span style="font-size:10.3px;color:#444;margin-left:.4px;position:relative;top:-.7px">√</span></div>
<div class="dc" style="left:572.9px;width:67.1px;"><span style="font-size:10.3px;color:#444;margin-left:.4px;position:relative;top:-.7px">√</span></div>
<div class="dc" style="left:640px;width:67.9px;"></div>
</div>
<div class="drow" style="left:-1px;top:66.1px;background:#b0d6f7">
<div class="dc" style="left:0px;width:45.5px;padding-left:6px;"><svg class="ico" style="left:7.8px;top:8.7px" width="7" height="6.6" viewBox="0 0 7 6.6"><path d="M0 0l7 3.3L0 6.6z" fill="#3d6df5"/></svg></div>
<div class="dc" style="left:45.5px;width:67.2px;"><svg class="ico" style="left:18.8px;top:6.6px" width="11.4" height="11.4"><use href="#cm"/></svg><svg class="ico" style="left:35.5px;top:6.6px" width="11.4" height="11.4"><use href="#cp"/></svg></div>
<div class="dc" style="left:112.7px;width:68.2px;font-size:10.6px;padding-left:2.2px;color:#646464;">成都仓库...</div>
<div class="dc" style="left:180.9px;width:67.1px;"></div>
<div class="dc" style="left:248px;width:67.6px;"></div>
<div class="dc" style="left:315.6px;width:122.3px;">Ge-001</div>
<div class="dc" style="left:437.9px;width:67.1px;"><span style="font-size:10.3px;color:#444;margin-left:.4px;position:relative;top:-.7px">√</span></div>
<div class="dc" style="left:505px;width:67.9px;"></div>
<div class="dc" style="left:572.9px;width:67.1px;"></div>
<div class="dc" style="left:640px;width:67.9px;"><span style="font-size:10.3px;color:#444;margin-left:.4px;position:relative;top:-.7px">√</span></div>
</div>
<div class="drow" style="left:-1px;top:88.6px;background:#fff">
<div class="dc" style="left:0px;width:45.5px;padding-left:6px;">4</div>
<div class="dc" style="left:45.5px;width:67.2px;"><svg class="ico" style="left:18.8px;top:6.6px" width="11.4" height="11.4"><use href="#cm"/></svg><svg class="ico" style="left:35.5px;top:6.6px" width="11.4" height="11.4"><use href="#cp"/></svg></div>
<div class="dc" style="left:112.7px;width:68.2px;font-size:10.6px;padding-left:2.2px;color:#646464;">成都仓库...</div>
<div class="dc" style="left:180.9px;width:67.1px;"></div>
<div class="dc" style="left:248px;width:67.6px;"></div>
<div class="dc" style="left:315.6px;width:122.3px;">Ge-002</div>
<div class="dc" style="left:437.9px;width:67.1px;"><span style="font-size:10.3px;color:#444;margin-left:.4px;position:relative;top:-.7px">√</span></div>
<div class="dc" style="left:505px;width:67.9px;"><span style="font-size:10.3px;color:#444;margin-left:.4px;position:relative;top:-.7px">√</span></div>
<div class="dc" style="left:572.9px;width:67.1px;"></div>
<div class="dc" style="left:640px;width:67.9px;"></div>
</div>
<div class="drow" style="left:-1px;top:111.1px;background:#eef1f6">
<div class="dc" style="left:0px;width:45.5px;padding-left:6px;">5</div>
<div class="dc" style="left:45.5px;width:67.2px;"><svg class="ico" style="left:18.8px;top:6.6px" width="11.4" height="11.4"><use href="#cm"/></svg><svg class="ico" style="left:35.5px;top:6.6px" width="11.4" height="11.4"><use href="#cp"/></svg></div>
<div class="dc" style="left:112.7px;width:68.2px;font-size:10.6px;padding-left:2.2px;color:#646464;">成都仓库...</div>
<div class="dc" style="left:180.9px;width:67.1px;"></div>
<div class="dc" style="left:248px;width:67.6px;"></div>
<div class="dc" style="left:315.6px;width:122.3px;">Ge-003</div>
<div class="dc" style="left:437.9px;width:67.1px;"><span style="font-size:10.3px;color:#444;margin-left:.4px;position:relative;top:-.7px">√</span></div>
<div class="dc" style="left:505px;width:67.9px;"><span style="font-size:10.3px;color:#444;margin-left:.4px;position:relative;top:-.7px">√</span></div>
<div class="dc" style="left:572.9px;width:67.1px;"></div>
<div class="dc" style="left:640px;width:67.9px;"></div>
</div>
<div class="drow" style="left:-1px;top:133.6px;background:#fff">
<div class="dc" style="left:0px;width:45.5px;padding-left:6px;">6</div>
<div class="dc" style="left:45.5px;width:67.2px;"><svg class="ico" style="left:18.8px;top:6.6px" width="11.4" height="11.4"><use href="#cm"/></svg><svg class="ico" style="left:35.5px;top:6.6px" width="11.4" height="11.4"><use href="#cp"/></svg></div>
<div class="dc" style="left:112.7px;width:68.2px;font-size:10.6px;padding-left:2.2px;color:#646464;">成都仓库...</div>
<div class="dc" style="left:180.9px;width:67.1px;"></div>
<div class="dc" style="left:248px;width:67.6px;"></div>
<div class="dc" style="left:315.6px;width:122.3px;">Ge-004</div>
<div class="dc" style="left:437.9px;width:67.1px;"><span style="font-size:10.3px;color:#444;margin-left:.4px;position:relative;top:-.7px">√</span></div>
<div class="dc" style="left:505px;width:67.9px;"><span style="font-size:10.3px;color:#444;margin-left:.4px;position:relative;top:-.7px">√</span></div>
<div class="dc" style="left:572.9px;width:67.1px;"></div>
<div class="dc" style="left:640px;width:67.9px;"></div>
</div>
<div class="drow" style="left:-1px;top:156.1px;background:#eef1f6">
<div class="dc" style="left:0px;width:45.5px;padding-left:6px;">7</div>
<div class="dc" style="left:45.5px;width:67.2px;"><svg class="ico" style="left:18.8px;top:6.6px" width="11.4" height="11.4"><use href="#cm"/></svg><svg class="ico" style="left:35.5px;top:6.6px" width="11.4" height="11.4"><use href="#cp"/></svg></div>
<div class="dc" style="left:112.7px;width:68.2px;font-size:10.6px;padding-left:2.2px;color:#646464;">成都仓库...</div>
<div class="dc" style="left:180.9px;width:67.1px;"></div>
<div class="dc" style="left:248px;width:67.6px;"></div>
<div class="dc" style="left:315.6px;width:122.3px;">Ge-005</div>
<div class="dc" style="left:437.9px;width:67.1px;"><span style="font-size:10.3px;color:#444;margin-left:.4px;position:relative;top:-.7px">√</span></div>
<div class="dc" style="left:505px;width:67.9px;"><span style="font-size:10.3px;color:#444;margin-left:.4px;position:relative;top:-.7px">√</span></div>
<div class="dc" style="left:572.9px;width:67.1px;"></div>
<div class="dc" style="left:640px;width:67.9px;"></div>
</div>
<div class="drow" style="left:-1px;top:178.6px;background:#fff">
<div class="dc" style="left:0px;width:45.5px;padding-left:6px;">8</div>
<div class="dc" style="left:45.5px;width:67.2px;"><svg class="ico" style="left:18.8px;top:6.6px" width="11.4" height="11.4"><use href="#cm"/></svg><svg class="ico" style="left:35.5px;top:6.6px" width="11.4" height="11.4"><use href="#cp"/></svg></div>
<div class="dc" style="left:112.7px;width:68.2px;font-size:10.6px;padding-left:2.2px;color:#646464;">成都仓库...</div>
<div class="dc" style="left:180.9px;width:67.1px;"></div>
<div class="dc" style="left:248px;width:67.6px;"></div>
<div class="dc" style="left:315.6px;width:122.3px;">Ge-006</div>
<div class="dc" style="left:437.9px;width:67.1px;"><span style="font-size:10.3px;color:#444;margin-left:.4px;position:relative;top:-.7px">√</span></div>
<div class="dc" style="left:505px;width:67.9px;"><span style="font-size:10.3px;color:#444;margin-left:.4px;position:relative;top:-.7px">√</span></div>
<div class="dc" style="left:572.9px;width:67.1px;"></div>
<div class="dc" style="left:640px;width:67.9px;"></div>
</div>
<div class="drow" style="left:-1px;top:201.1px;background:#eef1f6">
<div class="dc" style="left:0px;width:45.5px;padding-left:6px;">9</div>
<div class="dc" style="left:45.5px;width:67.2px;"><svg class="ico" style="left:18.8px;top:6.6px" width="11.4" height="11.4"><use href="#cm"/></svg><svg class="ico" style="left:35.5px;top:6.6px" width="11.4" height="11.4"><use href="#cp"/></svg></div>
<div class="dc" style="left:112.7px;width:68.2px;font-size:10.6px;padding-left:2.2px;color:#646464;">成都仓库...</div>
<div class="dc" style="left:180.9px;width:67.1px;"></div>
<div class="dc" style="left:248px;width:67.6px;"></div>
<div class="dc" style="left:315.6px;width:122.3px;">Ge-007</div>
<div class="dc" style="left:437.9px;width:67.1px;"><span style="font-size:10.3px;color:#444;margin-left:.4px;position:relative;top:-.7px">√</span></div>
<div class="dc" style="left:505px;width:67.9px;"><span style="font-size:10.3px;color:#444;margin-left:.4px;position:relative;top:-.7px">√</span></div>
<div class="dc" style="left:572.9px;width:67.1px;"></div>
<div class="dc" style="left:640px;width:67.9px;"></div>
</div>
<div class="drow" style="left:-1px;top:223.6px;background:#fff">
<div class="dc" style="left:0px;width:45.5px;padding-left:6px;">10</div>
<div class="dc" style="left:45.5px;width:67.2px;"><svg class="ico" style="left:18.8px;top:6.6px" width="11.4" height="11.4"><use href="#cm"/></svg><svg class="ico" style="left:35.5px;top:6.6px" width="11.4" height="11.4"><use href="#cp"/></svg></div>
<div class="dc" style="left:112.7px;width:68.2px;font-size:10.6px;padding-left:2.2px;color:#646464;">成都仓库...</div>
<div class="dc" style="left:180.9px;width:67.1px;"></div>
<div class="dc" style="left:248px;width:67.6px;"></div>
<div class="dc" style="left:315.6px;width:122.3px;">Ge-008</div>
<div class="dc" style="left:437.9px;width:67.1px;"><span style="font-size:10.3px;color:#444;margin-left:.4px;position:relative;top:-.7px">√</span></div>
<div class="dc" style="left:505px;width:67.9px;"><span style="font-size:10.3px;color:#444;margin-left:.4px;position:relative;top:-.7px">√</span></div>
<div class="dc" style="left:572.9px;width:67.1px;"></div>
<div class="dc" style="left:640px;width:67.9px;"></div>
</div>
<div class="drow" style="left:-1px;top:246.1px;background:#eef1f6">
<div class="dc" style="left:0px;width:45.5px;padding-left:6px;">11</div>
<div class="dc" style="left:45.5px;width:67.2px;"><svg class="ico" style="left:18.8px;top:6.6px" width="11.4" height="11.4"><use href="#cm"/></svg><svg class="ico" style="left:35.5px;top:6.6px" width="11.4" height="11.4"><use href="#cp"/></svg></div>
<div class="dc" style="left:112.7px;width:68.2px;font-size:10.6px;padding-left:2.2px;color:#646464;">成都仓库...</div>
<div class="dc" style="left:180.9px;width:67.1px;"></div>
<div class="dc" style="left:248px;width:67.6px;"></div>
<div class="dc" style="left:315.6px;width:122.3px;">Ge-009</div>
<div class="dc" style="left:437.9px;width:67.1px;"><span style="font-size:10.3px;color:#444;margin-left:.4px;position:relative;top:-.7px">√</span></div>
<div class="dc" style="left:505px;width:67.9px;"><span style="font-size:10.3px;color:#444;margin-left:.4px;position:relative;top:-.7px">√</span></div>
<div class="dc" style="left:572.9px;width:67.1px;"></div>
<div class="dc" style="left:640px;width:67.9px;"></div>
</div>
<div class="drow" style="left:-1px;top:268.6px;background:#fff">
<div class="dc" style="left:0px;width:45.5px;padding-left:6px;">12</div>
<div class="dc" style="left:45.5px;width:67.2px;"><svg class="ico" style="left:18.8px;top:6.6px" width="11.4" height="11.4"><use href="#cm"/></svg><svg class="ico" style="left:35.5px;top:6.6px" width="11.4" height="11.4"><use href="#cp"/></svg></div>
<div class="dc" style="left:112.7px;width:68.2px;font-size:10.6px;padding-left:2.2px;color:#646464;">成都仓库...</div>
<div class="dc" style="left:180.9px;width:67.1px;"></div>
<div class="dc" style="left:248px;width:67.6px;"></div>
<div class="dc" style="left:315.6px;width:122.3px;">Ge-010</div>
<div class="dc" style="left:437.9px;width:67.1px;"><span style="font-size:10.3px;color:#444;margin-left:.4px;position:relative;top:-.7px">√</span></div>
<div class="dc" style="left:505px;width:67.9px;"><span style="font-size:10.3px;color:#444;margin-left:.4px;position:relative;top:-.7px">√</span></div>
<div class="dc" style="left:572.9px;width:67.1px;"></div>
<div class="dc" style="left:640px;width:67.9px;"></div>
</div>
<div class="abs" style="left:-1px;top:291.1px;width:708px;height:1px;background:#eaebee"></div>
<div class="abs" style="left:-1px;top:20.6px;width:1px;height:270.5px;background:#e3e5e9"></div>
<div class="abs" style="left:-1px;top:-1px;width:760px;height:1px;background:rgba(36,50,90,.3)"></div>
<div class="abs" style="left:-1px;top:20.3px;width:760px;height:1px;background:rgba(36,50,90,.4)"></div>
</div>
<div class="btn" style="left:314px;top:440px;width:78px;height:22.6px;line-height:22.6px;font-size:10.8px">确 定(Ctrl+S)</div>
<div class="btn" style="left:408.6px;top:440px;width:38.8px;height:22.6px;line-height:22.6px;font-size:10.4px">关 闭</div>
</div>
<svg class="abs" style="left:0;top:0;pointer-events:none" width="1080" height="587" viewBox="0 0 1080 587"><path d="M204.2 190.5L294.6 105.3L292.5 102L303.2 99.8L300.4 110.8L297.3 108z" fill="#f5222d"/></svg>
<div class="btn" style="left:994.4px;top:557px;width:74.4px;height:22.5px;line-height:24.2px;font-size:10.9px;border-radius:3.5px">保存(Ctrl+S)</div>
</body></html>
